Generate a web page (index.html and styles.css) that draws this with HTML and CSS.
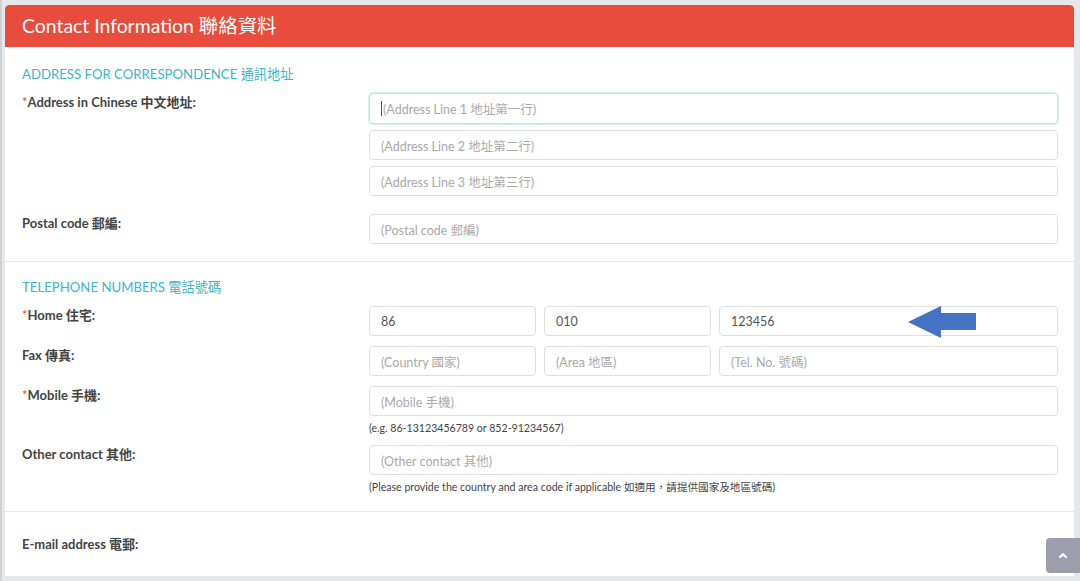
FILE: index.html
```html
<!DOCTYPE html>
<html lang="zh-Hant">
<head>
<meta charset="utf-8">
<title>Contact Information</title>
<link rel="stylesheet" href="styles.css">
</head>
<body>
<div class="card">
  <div class="card-header">Contact Information 聯絡資料</div>

  <section class="section">
    <h3 class="section-title">ADDRESS FOR CORRESPONDENCE 通訊地址</h3>
    <div class="row">
      <label class="label"><span class="req">*</span>Address in Chinese 中文地址:</label>
      <div class="field stack">
        <div class="input focus"><span class="caret"></span><span class="ph">(Address Line 1 地址第一行)</span></div>
        <div class="input"><span class="ph">(Address Line 2 地址第二行)</span></div>
        <div class="input"><span class="ph">(Address Line 3 地址第三行)</span></div>
      </div>
    </div>
    <div class="row">
      <label class="label">Postal code 郵編:</label>
      <div class="field">
        <div class="input"><span class="ph">(Postal code 郵編)</span></div>
      </div>
    </div>
  </section>

  <section class="section">
    <h3 class="section-title">TELEPHONE NUMBERS 電話號碼</h3>
    <div class="row">
      <label class="label"><span class="req">*</span>Home 住宅:</label>
      <div class="field phone">
        <div class="input"><span class="val">86</span></div>
        <div class="input"><span class="val">010</span></div>
        <div class="input tel"><span class="val">123456</span>
          <svg class="arrow" width="68" height="32" viewBox="0 0 68 32"><polygon points="0,16 33,0 33,7 68,7 68,24 33,24 33,32" fill="#4472c4"/></svg>
        </div>
      </div>
    </div>
    <div class="row">
      <label class="label">Fax 傳真:</label>
      <div class="field phone">
        <div class="input"><span class="ph">(Country 國家)</span></div>
        <div class="input"><span class="ph">(Area 地區)</span></div>
        <div class="input"><span class="ph">(Tel. No. 號碼)</span></div>
      </div>
    </div>
    <div class="row">
      <label class="label"><span class="req">*</span>Mobile 手機:</label>
      <div class="field">
        <div class="input"><span class="ph">(Mobile 手機)</span></div>
        <p class="help">(e.g. 86-13123456789 or 852-91234567)</p>
      </div>
    </div>
    <div class="row">
      <label class="label">Other contact 其他:</label>
      <div class="field">
        <div class="input"><span class="ph">(Other contact 其他)</span></div>
        <p class="help">(Please provide the country and area code if applicable 如適用，請提供國家及地區號碼)</p>
      </div>
    </div>
  </section>

  <section class="section email">
    <div class="row">
      <label class="label">E-mail address 電郵:</label>
      <div class="field"></div>
    </div>
  </section>
</div>

<button class="to-top" aria-label="Back to top">
  <svg width="10" height="7" viewBox="0 0 10 7"><path d="M2 5 L5 2.2 L8 5" fill="none" stroke="#fff" stroke-width="2.2" stroke-linecap="round" stroke-linejoin="round"/></svg>
</button>
</body>
</html>
```

FILE: styles.css
```css
* { box-sizing: border-box; }

html, body {
  margin: 0;
  padding: 0;
  height: 100%;
  overflow: hidden;
}

body {
  background: #e6e7ea;
  font-family: "Lato", "Noto Sans CJK TC", sans-serif;
  color: #444;
  padding: 5px 6px 0 5px;
  box-shadow: inset 2px 0 0 #cfd0d3;
}

.card {
  background: #fff;
  border-radius: 4px 4px 0 0;
  height: 571px;
  overflow: hidden;
}

.card-header {
  background: #e74c3c;
  color: #fff;
  height: 42px;
  line-height: 42px;
  padding: 0 17px;
  font-size: 19.4px;
  border-radius: 4px 4px 0 0;
}

.section {
  padding: 18px 16px 17px 17px;
  border-bottom: 1px solid #e6e6e6;
}

.section + .section {
  padding-top: 16px;
}

.section-title {
  margin: 0 0 10px;
  font-size: 13.2px;
  line-height: 18px;
  font-weight: 400;
  color: #3db5c4;
}

.row {
  display: grid;
  grid-template-columns: 347px 1fr;
  margin-bottom: 10px;
}

.row:last-child { margin-bottom: 0; }

.label {
  font-size: 13px;
  font-weight: 700;
  line-height: 18px;
  color: #444;
}

.req { color: #e74c3c; font-weight: 400; }

.stack {
  display: flex;
  flex-direction: column;
  gap: 6px;
  margin-bottom: 8px;
}

.phone {
  display: grid;
  grid-template-columns: 167px 167px 1fr;
  gap: 8px;
}

.input {
  position: relative;
  height: 30px;
  border: 1px solid #dedede;
  border-radius: 4px;
  padding: 0 11px;
  display: flex;
  align-items: center;
  font-size: 12.5px;
  background: #fff;
}

.input.focus {
  height: 31px;
  border-color: #b8e4e8;
  box-shadow: 0 0 0 1px #d8f0f2;
}

.caret {
  width: 1px;
  height: 15px;
  background: #555;
  margin-right: 1px;
}

.ph { color: #a9a9a9; }
.val { color: #555; }

.help {
  margin: 5px 0 0;
  font-size: 10.6px;
  line-height: 14px;
  color: #444;
}

.arrow {
  position: absolute;
  left: 188px;
  top: -1px;
}

.section.email {
  border-bottom: none;
  padding-top: 23px;
}

.to-top {
  position: fixed;
  right: -4px;
  bottom: 8px;
  width: 38px;
  height: 35px;
  border: none;
  border-radius: 4px;
  background: #9c9eac;
  display: flex;
  align-items: center;
  justify-content: center;
  padding: 0 4px 0 0;
}
```
